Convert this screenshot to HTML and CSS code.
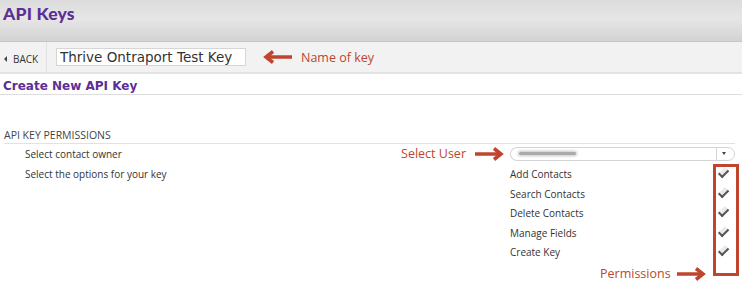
FILE: index.html
```html
<!DOCTYPE html>
<html lang="en">
<head>
  <meta charset="UTF-8" />
  <title>API Keys</title>
  <link rel="stylesheet" href="styles.css">
</head>
<body>

  <header class="topbar">
    <h1>API Keys</h1>
  </header>

  <div class="toolbar">
    <a class="back" href="#"><span class="tri"></span>BACK</a>
    <div class="name-cell">
      <input type="text" class="key-name" value="Thrive Ontraport Test Key">
      <span class="note note-name">
        <svg width="30" height="14" viewBox="0 0 30 14"><path d="M6 7H30" stroke="#c0452e" stroke-width="3.5"/><path d="M11 1.5L4 7l7 5.5" fill="none" stroke="#c0452e" stroke-width="3.5"/></svg>
        Name of key
      </span>
    </div>
  </div>

  <h2 class="section-title">Create New API Key</h2>

  <div class="perms">
    <div class="perms-head">API KEY PERMISSIONS</div>

    <div class="row row-owner">
      <span class="label">Select contact owner</span>
      <span class="note note-user">
        Select User
        <svg width="30" height="14" viewBox="0 0 30 14"><path d="M0 7H24" stroke="#c0452e" stroke-width="3.5"/><path d="M19 1.5L26 7l-7 5.5" fill="none" stroke="#c0452e" stroke-width="3.5"/></svg>
      </span>
      <div class="select">
        <div class="select-value"><span class="blur"></span></div>
        <div class="select-btn"><span></span></div>
      </div>
    </div>

    <div class="row row-opts">
      <span class="label">Select the options for your key</span>
      <span></span>
      <ul class="opts">
        <li>Add Contacts <span class="check"></span></li>
        <li>Search Contacts <span class="check"></span></li>
        <li>Delete Contacts <span class="check"></span></li>
        <li>Manage Fields <span class="check"></span></li>
        <li>Create Key <span class="check"></span></li>
      </ul>
    </div>

    <div class="highlight"></div>
    <span class="note note-perms">
      Permissions
      <svg width="30" height="14" viewBox="0 0 30 14"><path d="M0 7H24" stroke="#c0452e" stroke-width="3.5"/><path d="M19 1.5L26 7l-7 5.5" fill="none" stroke="#c0452e" stroke-width="3.5"/></svg>
    </span>
  </div>

</body>
</html>
```

FILE: styles.css
```css
body {
  margin: 0;
  font-family: 'Open Sans', sans-serif;
  background: white;
  color: #333;
  width: 742px;
  height: 296px;
  overflow: hidden;
}

.topbar {
  height: 41px;
  background: linear-gradient(#dcdcdc, #e6e6e6 45%, #d3d3d3);
  border-bottom: 1px solid #c6c6c6;
}

.topbar h1 {
  margin: 0;
  padding: 3px 0 0 3px;
  font-family: 'Lato', sans-serif;
  font-size: 17.5px;
  font-weight: 900;
  color: #5b2f95;
  letter-spacing: 0.2px;
}

.toolbar {
  display: flex;
  height: 30px;
  background: #f2f2f2;
  border-bottom: 2px solid #e3e3e3;
}

.back {
  display: flex;
  align-items: center;
  gap: 6px;
  width: 42px;
  padding-left: 4px;
  padding-top: 3px;
  border-right: 1px solid #e0e0e0;
  font-size: 10px;
  color: #333;
  text-decoration: none;
}

.tri {
  border-right: 3px solid #444;
  border-top: 3px solid transparent;
  border-bottom: 3px solid transparent;
}

.name-cell {
  display: flex;
  align-items: center;
  padding-left: 9px;
}

.key-name {
  width: 190px;
  height: 18px;
  box-sizing: border-box;
  border: 1px solid #d6d6d6;
  background: white;
  padding: 0 3px;
  font-family: 'DejaVu Sans', sans-serif;
  font-size: 13.5px;
  color: #333;
}

.note {
  display: flex;
  align-items: center;
  gap: 9px;
  font-size: 12.5px;
  color: #c0452e;
}

.note-name {
  margin-left: 16px;
}

.section-title {
  margin: 0;
  padding: 5px 0 0 3px;
  height: 15px;
  font-family: 'DejaVu Sans', sans-serif;
  font-size: 12px;
  font-weight: bold;
  color: #5b2f95;
  border-bottom: 1px solid #ddd;
}

.perms {
  position: relative;
  padding: 33px 7px 0 4px;
}

.perms-head {
  font-size: 10.5px;
  color: #444;
  padding-bottom: 1px;
  border-bottom: 1px solid #e2e2e2;
}

.row {
  display: grid;
  grid-template-columns: 1fr auto 225px;
  align-items: center;
  padding-left: 21px;
  font-size: 10px;
}

.row-owner {
  margin-top: 1px;
}

.row-opts {
  align-items: start;
  margin-top: 4px;
}

.row-opts .label {
  line-height: 16px;
}

.note-user {
  margin-right: 5px;
}

.select {
  display: flex;
  height: 14px;
}

.select-value {
  flex: 1;
  border: 1px solid #d4d4d4;
  border-right: none;
  border-radius: 8px 0 0 8px;
  display: flex;
  align-items: center;
  padding-left: 8px;
}

.blur {
  width: 57px;
  height: 3px;
  background: #aaa;
  border-radius: 2px;
  box-shadow: 0 0 3px 1px #c4c4c4;
}

.select-btn {
  width: 17px;
  border: 1px solid #d4d4d4;
  border-radius: 0 8px 8px 0;
  display: flex;
  align-items: center;
  justify-content: center;
}

.select-btn span {
  border-top: 3px solid #444;
  border-left: 2px solid transparent;
  border-right: 2px solid transparent;
  margin-right: 3px;
}

.opts {
  list-style: none;
  margin: 0;
  padding: 0;
}

.opts li {
  display: flex;
  justify-content: space-between;
  align-items: center;
  height: 19.5px;
  line-height: 16px;
  padding-bottom: 3px;
  box-sizing: border-box;
}

.check {
  width: 8px;
  height: 4px;
  margin-right: 5px;
  border-left: 2px solid #555;
  border-bottom: 2px solid #555;
  transform: rotate(-45deg) translateY(-2px);
  background: #eaeaea;
}

.highlight {
  position: absolute;
  left: 713px;
  top: 69px;
  width: 20px;
  height: 106px;
  border: 3px solid #c0452e;
}

.note-perms {
  position: absolute;
  left: 600px;
  top: 170px;
  gap: 6px;
}
```
